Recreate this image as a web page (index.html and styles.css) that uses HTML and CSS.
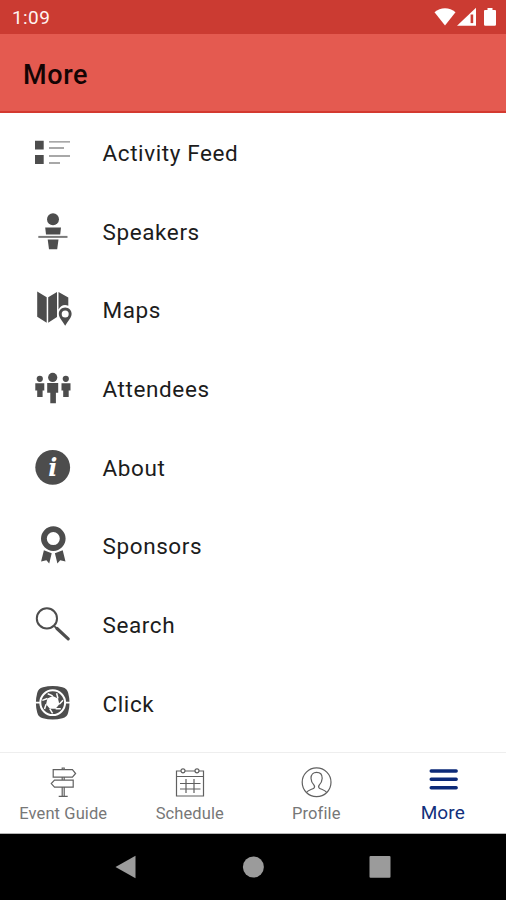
FILE: index.html
```
<!DOCTYPE html>
<html lang="en">
<head>
    <meta charset="UTF-8">
    <meta name="viewport" content="width=device-width, initial-scale=1.0">
    <title>More</title>
    <link rel="stylesheet" href="styles.css">
</head>
<body>

<div class="status-bar">
    <span class="time">1:09</span>
    <svg class="status-icons" width="64" height="22" viewBox="0 0 64 22" fill="#fff">
        <path d="M0.5 5.2C6.5-0.2 15.5-0.2 21.5 5.2L11 18.5Z"/>
        <path d="M23 18.8L42 0.8V18.8Z"/>
        <path d="M36.6 7.5h2.6v8.6H36.6z" fill="#cb3b32"/>
        <path d="M53.5 1h5v2h2.5q1 0 1 1v13.6q0 1.2-1.2 1.2h-9.6q-1.2 0-1.2-1.2V4q0-1 1-1h2.5z"/>
    </svg>
</div>

<header>
    <h1>More</h1>
</header>

<main class="menu">
    <a class="menu-item">
        <svg class="menu-icon" viewBox="0 0 40 40">
            <path d="M2 7.7h8.7v8.7H2zM2 22h8.7v8.9H2z"/>
            <path d="M16 8.9h21M16 15h15M16 23h21M16 30h11" stroke="#8c8c8c" stroke-width="1.3"/>
        </svg>
        <span>Activity Feed</span>
    </a>
    <a class="menu-item">
        <svg class="menu-icon" viewBox="0 0 40 40">
            <circle cx="20" cy="7.3" r="6"/>
            <path d="M12.2 15.6h15.8l-0.8 6.8H13zM14.7 27.6h10.8l-1.3 9.6h-8.2z"/>
            <path d="M5.3 24.9h29.2" stroke="#7a7a7a" stroke-width="2"/>
        </svg>
        <span>Speakers</span>
    </a>
    <a class="menu-item">
        <svg class="menu-icon" viewBox="0 0 40 40">
            <path d="M4.2 1.5l9.5 5.8v25.4L4.2 26.8zM15.2 7.3L24 2v25l-8.8 5.7zM25.5 2L35.3 7.5v8.2c-4.5-1.8-8 .3-9.8 3.8z"/>
            <path fill-rule="evenodd" d="M32.2 17.5c3.6 0 6.4 2.8 6.4 6.3 0 3.8-3.5 7-6.4 11.9-2.9-4.9-6.4-8.1-6.4-11.9 0-3.5 2.8-6.3 6.4-6.3zm0 2.9a3.5 3.5 0 1 0 0 7 3.5 3.5 0 0 0 0-7z"/>
        </svg>
        <span>Maps</span>
    </a>
    <a class="menu-item">
        <svg class="menu-icon" viewBox="0 0 40 40">
            <circle cx="19.7" cy="8.4" r="4.6"/>
            <path d="M14.2 14h11v9.8h-2.3v10.5h-5.6V23.8h-3.1z"/>
            <circle cx="6.8" cy="9.8" r="3.1"/>
            <path d="M2.3 14.2h9v7.2H9.6v6.5H4.2v-6.5H2.3z"/>
            <circle cx="32.8" cy="9.8" r="3.1"/>
            <path d="M28.5 14.2h9v7.2h-1.8v6.5h-5.5v-6.5h-1.7z"/>
        </svg>
        <span>Attendees</span>
    </a>
    <a class="menu-item">
        <svg class="menu-icon" viewBox="0 0 40 40">
            <circle cx="19.7" cy="19.4" r="17.4"/>
            <text class="info-letter" x="19.7" y="28.4">i</text>
        </svg>
        <span>About</span>
    </a>
    <a class="menu-item">
        <svg class="menu-icon" viewBox="0 0 40 40">
            <circle cx="20.3" cy="12.6" r="9.4" fill="none" stroke="#4d4d4d" stroke-width="5.8"/>
            <path d="M10.9 24.2l7.8 3L16.2 37.4l-2.8-3.2-5.3 1.4zM29.7 24.2l-7.8 3 2.5 10.2 2.8-3.2 5.3 1.4z"/>
        </svg>
        <span>Sponsors</span>
    </a>
    <a class="menu-item">
        <svg class="menu-icon" viewBox="0 0 40 40">
            <circle cx="13.9" cy="13.4" r="10.1" fill="none" stroke="#4d4d4d" stroke-width="2"/>
            <path d="M21.3 21.2l3 2.8" stroke="#4d4d4d" stroke-width="1.8"/>
            <path d="M24 23.5l11.2 10.4" stroke="#4d4d4d" stroke-width="3.2" stroke-linecap="round"/>
        </svg>
        <span>Search</span>
    </a>
    <a class="menu-item">
        <svg class="menu-icon" viewBox="0 0 40 40">
            <path d="M10 3.2Q19.7 0.6 29.4 3.2Q34.2 4.4 35.2 9Q37.8 18.7 35.2 28.4Q34.2 33 29.4 34.2Q19.7 36.8 10 34.2Q5.2 33 4.2 28.4Q1.6 18.7 4.2 9Q5.2 4.4 10 3.2Z"/>
            <path d="M2 18.7h6M31.4 18.7h6" stroke="#fff" stroke-width="1.8"/>
            <circle cx="19.7" cy="18.7" r="12.4" fill="none" stroke="#fff" stroke-width="2"/>
            <!-- shutter blades -->
            <path d="M19.7 11.9l5.3 2.6 1.3 5.7-3.7 4.6h-5.8l-3.7-4.6 1.3-5.7z" fill="#fff"/>
            <path d="M19.7 11.9l-5-2.2M25 14.5l-1.4-5.2M26.3 20.2l3.7-3.9M22.6 24.8l5.2-0.1M16.8 24.8l2.8 4.5M13.1 20.2l-1.6 4.9M14.4 14.5l-5.1 1.9" stroke="#fff" stroke-width="1.5"/>
        </svg>
        <span>Click</span>
    </a>
</main>

<nav class="tab-bar">
    <a class="tab">
        <svg class="tab-icon" viewBox="0 0 32 32">
            <path d="M6.2 3.7h19.2l3.2 3.8-3.2 3.7H6.2zM26.2 14.2H7.5l-3.2 3.4 3.2 3.5h18.7zM15.2 3.5V2h2v1.5M15.2 11.3v2.8M17.2 11.3v2.8M15.2 21.2v9M17.2 21.2v9M11.7 30.4h9"/>
        </svg>
        <span>Event Guide</span>
    </a>
    <a class="tab">
        <svg class="tab-icon" viewBox="0 0 32 32">
            <path d="M7 5H2.5v25h27V5H25M11 5h10M2.5 10.5h27M6 17.5h20.5M6 23h20.5M12 13v14M20 13v14"/>
            <circle cx="9" cy="4.8" r="2"/>
            <circle cx="23" cy="4.8" r="2"/>
        </svg>
        <span>Schedule</span>
    </a>
    <a class="tab">
        <svg class="tab-icon" viewBox="0 0 32 32">
            <circle cx="16.6" cy="16.3" r="14.4"/>
            <path d="M6.4 26.5c1.7-2.7 5.5-3.1 7.4-4.3 1-.8.8-2.1.2-3-1.7-2-3-4.3-3-7 0-3.5 2.3-5.8 5.6-5.8s5.6 2.3 5.6 5.8c0 2.7-1.3 5-3 7-.6.9-.8 2.2.2 3 1.9 1.2 5.7 1.6 7.4 4.3"/>
        </svg>
        <span>Profile</span>
    </a>
    <a class="tab active">
        <svg class="tab-icon" viewBox="0 0 32 32">
            <path d="M4.2 5h25M4.2 13.3h25M4.2 21.7h25"/>
        </svg>
        <span>More</span>
    </a>
</nav>

<div class="system-bar">
    <svg width="22" height="24" viewBox="0 0 22 24"><path d="M0.5 12L20.5 0.8V23.2Z"/></svg>
    <svg width="22" height="24" viewBox="0 0 22 24"><circle cx="11.4" cy="12" r="10.5"/></svg>
    <svg width="22" height="24" viewBox="0 0 22 24"><rect x="0.5" y="1" width="21" height="21.7" rx="1"/></svg>
</div>

</body>
</html>
```
FILE: styles.css
```
* {
    box-sizing: border-box;
}

body {
    font-family: Roboto, 'Liberation Sans', sans-serif;
    margin: 0;
    height: 900px;
    display: flex;
    flex-direction: column;
    overflow: hidden;
    background-color: #ffffff;
    color: #1c1c1c;
}

.status-bar {
    height: 34px;
    flex: none;
    display: flex;
    justify-content: space-between;
    align-items: center;
    padding: 2px 8px 0 12px;
    background-color: #cb3b32;
    color: #fff3f1;
}

.time {
    font-size: 19px;
    line-height: 22px;
    letter-spacing: 0.4px;
}

header {
    height: 79px;
    flex: none;
    display: flex;
    align-items: center;
    padding: 5px 23px 0;
    background-color: #e45a50;
    border-bottom: 2px solid #d43a30;
}

header h1 {
    margin: 0;
    font-size: 27px;
    font-weight: 500;
    letter-spacing: 0.6px;
    color: #140404;
}

.menu {
    flex: 1;
    padding-top: 0.6px;
}

.menu-item {
    height: 78.7px;
    display: flex;
    align-items: center;
    gap: 29.5px;
    padding-left: 33px;
    font-size: 22.5px;
    letter-spacing: 0.6px;
}

.menu-icon {
    width: 40px;
    height: 40px;
    fill: #4d4d4d;
}

.menu-icon .info-letter {
    font-family: 'DejaVu Serif', serif;
    font-size: 24px;
    font-style: italic;
    font-weight: bold;
    letter-spacing: 0;
    text-anchor: middle;
    fill: #ffffff;
}

.tab-bar {
    height: 82px;
    flex: none;
    display: flex;
    padding-top: 13px;
    border-top: 1px solid #eeeeee;
    border-bottom: 1px solid #b5b5b5;
}

.tab {
    flex: 1;
    display: flex;
    flex-direction: column;
    align-items: center;
    font-size: 16.5px;
    line-height: 22px;
    letter-spacing: 0.1px;
    color: #777777;
}

.tab-icon {
    width: 32px;
    height: 32px;
    margin-bottom: 5px;
    fill: none;
    stroke: #606060;
    stroke-width: 1.2;
}

.active {
    font-size: 19px;
    color: #12307c;
}

.active .tab-icon {
    margin-bottom: 4px;
    stroke: #0c2a78;
    stroke-width: 3.4;
    stroke-linecap: round;
}

.system-bar {
    height: 66px;
    flex: none;
    display: flex;
    justify-content: space-between;
    align-items: center;
    padding: 0 115px;
    background-color: #000000;
    fill: #9b9b9b;
}
```
